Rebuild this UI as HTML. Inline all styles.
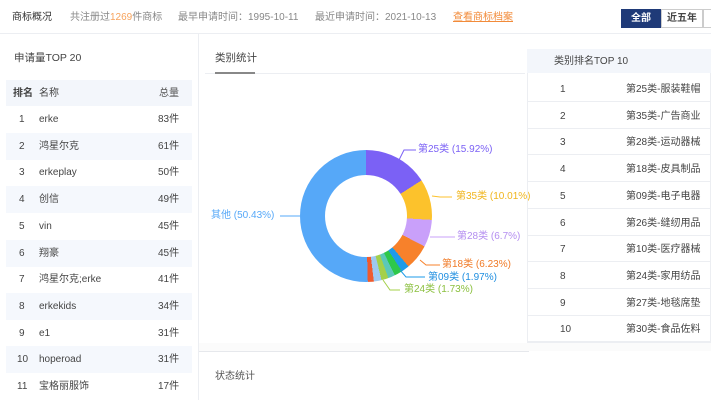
<!DOCTYPE html>
<html><head><meta charset="utf-8"><style>
*{margin:0;padding:0;box-sizing:border-box}
body{width:711px;height:400px;overflow:hidden;background:#fff;font-family:"Liberation Sans","Noto Sans CJK SC",sans-serif;color:#333;position:relative;font-size:10px;line-height:12px}
.a{position:absolute;white-space:nowrap;line-height:12px}
.g{color:#888}
</style></head><body>
<div class="a" style="left:0;top:0;width:711px;height:34px;border-bottom:1px solid #eceef2;background:#fff"></div>
<div class="a" style="left:12px;top:12px;font-size:10px;color:#333">商标概况</div>
<div class="a g" style="left:70px;top:12px">共注册过<span style="color:#f7a35c">1269</span>件商标</div>
<div class="a g" style="left:178px;top:12px">最早申请时间：1995-10-11</div>
<div class="a g" style="left:315px;top:12px">最近申请时间：2021-10-13</div>
<div class="a" style="left:453px;top:12px;color:#f28b3a;text-decoration:underline">查看商标档案</div>
<div class="a" style="left:621px;top:9px;width:40px;height:19px;background:#1f3a78;color:#fff;text-align:center;line-height:19px;font-weight:bold">全部</div>
<div class="a" style="left:661px;top:9px;width:42px;height:19px;border:1px solid #ccc;text-align:center;line-height:17px;font-weight:bold;color:#444">近五年</div>
<div class="a" style="left:703px;top:9px;width:20px;height:19px;border:1px solid #ccc"></div>
<div class="a" style="left:198px;top:34px;width:1px;height:366px;background:#eceef2"></div>
<div class="a" style="left:14px;top:52px;font-size:10.5px;color:#444">申请量TOP 20</div>
<div class="a" style="left:6px;top:80px;width:186px;height:26px;background:#f3f6fb"></div>
<div class="a" style="left:13px;top:88px;font-weight:bold;color:#444">排名</div>
<div class="a" style="left:39px;top:88px;color:#444">名称</div>
<div class="a" style="left:159px;top:88px;color:#555">总量</div>
<div id="lt"></div>
<div class="a" style="left:215px;top:52px;font-size:10.5px;color:#444">类别统计</div>
<div class="a" style="left:205px;top:73px;width:320px;height:1px;background:#eceef2"></div>
<div class="a" style="left:215px;top:72px;width:40px;height:2px;background:#888"></div>
<div class="a" style="left:300px;top:150px;width:132px;height:132px;border-radius:50%;background:conic-gradient(#7b61f5 0 15.92%,#fcc22c 0 25.93%,#c9a0fa 0 32.63%,#f7812b 0 38.86%,#1e9be8 0 40.83%,#2ec84a 0 42.8%,#5cc8b8 0 44.5%,#a4d04a 0 46.23%,#9ec9f0 0 48.1%,#ee5a2e 0 49.57%,#56a8f8 0 100%)"></div>
<div class="a" style="left:325px;top:175px;width:82px;height:82px;border-radius:50%;background:#fff"></div>
<svg class="a" style="left:0;top:0" width="711" height="400"><g fill="none" stroke-width="1">
<path d="M399 160 L404 150 L416 150" stroke="#7b61f5"/>
<path d="M432 196 L440 197 L452 197" stroke="#fcc22c"/>
<path d="M430 237 L438 237 L455 237" stroke="#c9a0fa"/>
<path d="M420 260 L426 265 L440 265" stroke="#f7812b"/>
<path d="M400 270 L406 277 L425 277" stroke="#1e9be8"/>
<path d="M383 280 L390 290 L400 290" stroke="#a4d04a"/>
<path d="M280 216 L300 216" stroke="#56a8f8"/>
</g></svg>
<div class="a" style="left:418px;top:144px;color:#7b61f5">第25类 (15.92%)</div>
<div class="a" style="left:456px;top:191px;color:#f0b51c">第35类 (10.01%)</div>
<div class="a" style="left:457px;top:231px;color:#b48ef0">第28类 (6.7%)</div>
<div class="a" style="left:442px;top:259px;color:#f07a26">第18类 (6.23%)</div>
<div class="a" style="left:428px;top:272px;color:#1e8ee0">第09类 (1.97%)</div>
<div class="a" style="left:404px;top:284px;color:#8cc040">第24类 (1.73%)</div>
<div class="a" style="left:211px;top:210px;color:#56a8f8">其他 (50.43%)</div>
<div class="a" style="left:527px;top:49px;width:184px;height:294px;border:1px solid #eceef2"></div>
<div class="a" style="left:527px;top:49px;width:184px;height:24px;background:#f3f6fb"></div>
<div class="a" style="left:554px;top:56px;color:#444">类别排名TOP 10</div>
<div id="rt"></div>
<div class="a" style="left:199px;top:351px;width:330px;height:1px;background:#e6e8ec"></div>
<div class="a" style="left:199px;top:343px;width:512px;height:8px;background:#fbfbfb"></div>
<div class="a" style="left:215px;top:371px;color:#555">状态统计</div>
<script>
var L=[["1","erke","83件"],["2","鸿星尔克","61件"],["3","erkeplay","50件"],["4","创信","49件"],["5","vin","45件"],["6","翔豪","45件"],["7","鸿星尔克;erke","41件"],["8","erkekids","34件"],["9","e1","31件"],["10","hoperoad","31件"],["11","宝格丽服饰","17件"]];
var h="";L.forEach(function(r,i){var y=Math.round(106+i*26.7);if(i%2==1)h+='<div class="a" style="left:6px;top:'+y+'px;width:186px;height:27px;background:#f5f8fd"></div>';var t=y+8;h+='<div class="a" style="left:'+(i>8?17:19)+'px;top:'+t+'px;color:#444">'+r[0]+'</div><div class="a" style="left:39px;top:'+t+'px;color:#444">'+r[1]+'</div><div class="a" style="left:158px;top:'+t+'px;color:#444">'+r[2]+'</div>';});
document.getElementById("lt").outerHTML=h;
var R=["第25类-服装鞋帽","第35类-广告商业","第28类-运动器械","第18类-皮具制品","第09类-电子电器","第26类-缝纫用品","第10类-医疗器械","第24类-家用纺品","第27类-地毯席垫","第30类-食品佐料"];
h="";R.forEach(function(r,i){var y=Math.round(75+i*26.7);h+='<div class="a" style="left:528px;top:'+(y+26)+'px;width:183px;height:1px;background:#eceef2"></div><div class="a" style="left:560px;top:'+(y+9)+'px;color:#444">'+(i+1)+'</div><div class="a" style="left:626px;top:'+(y+9)+'px;color:#444">'+r+'</div>';});
document.getElementById("rt").outerHTML=h;
</script>
</body></html>
